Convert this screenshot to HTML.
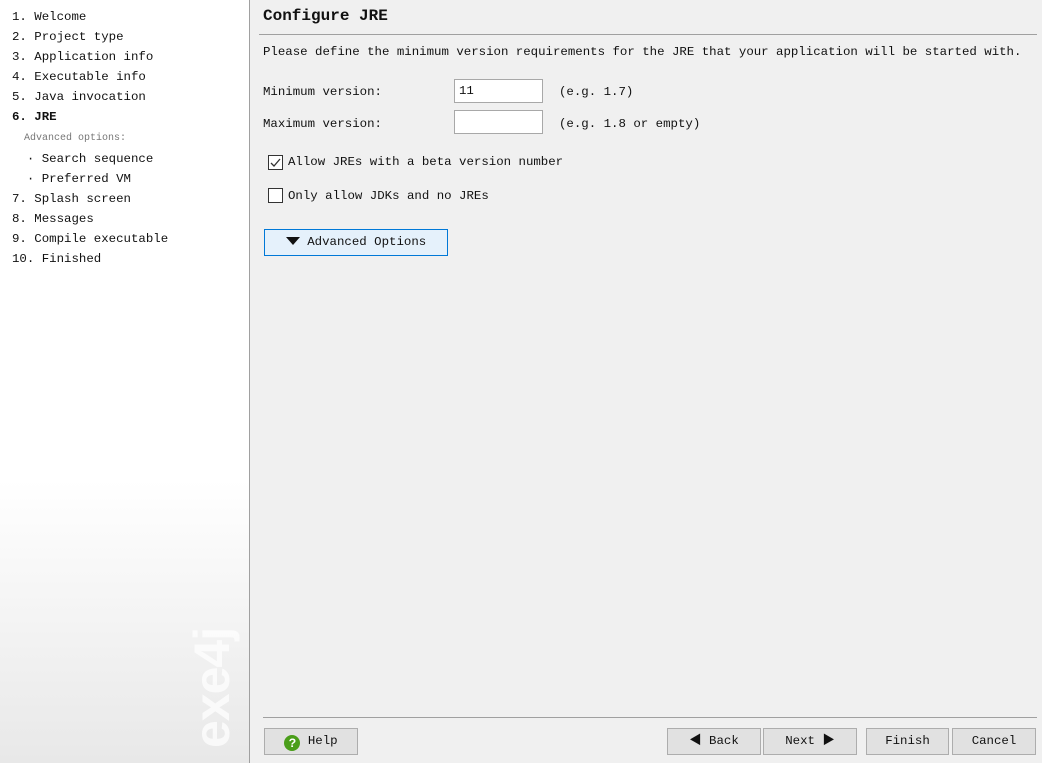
<!DOCTYPE html><html><head><style>
body{margin:0;width:1042px;height:763px;background:#f0f0f0;font-family:"Liberation Mono","Noto Serif CJK SC",monospace;font-size:12.4px;color:#111;position:relative;overflow:hidden}
.a{position:absolute;white-space:nowrap}
#side{position:absolute;left:0;top:0;width:249px;height:763px;background:linear-gradient(#fff 0,#fff 480px,#e8e8e8 763px);border-right:1px solid #a0a0a0}
.btn{position:absolute;height:27px;background:#e1e1e1;border:1px solid #adadad;box-sizing:border-box;text-align:center;line-height:25px;font-size:12.4px}
.inp{position:absolute;width:89px;height:24px;background:#fff;border:1px solid #a8a8a8;box-sizing:border-box;padding-left:4px;line-height:22px}
.cb{position:absolute;width:15px;height:15px;background:#fff;border:1px solid #333;box-sizing:border-box}
</style></head><body>
<div id="side">
<div class="a" style="left:12px;top:7px;line-height:20px">1. Welcome<br>2. Project type<br>3. Application info<br>4. Executable info<br>5. Java invocation<br><b>6. JRE</b><br><span style="font-size:10px;color:#777">&nbsp;&nbsp;Advanced options:</span><br>&nbsp;&nbsp;· Search sequence<br>&nbsp;&nbsp;· Preferred VM<br>7. Splash screen<br>8. Messages<br>9. Compile executable<br>10. Finished</div>
<div class="a" style="transform:rotate(-90deg);transform-origin:0 0;top:748px;left:186px;font-family:'Liberation Sans',sans-serif;font-weight:bold;font-size:50px;color:#fff;opacity:.75;line-height:52px;letter-spacing:-1px">exe4j</div>
</div>
<div class="a" style="left:263px;top:7px;font-size:16px;font-weight:bold">Configure JRE</div>
<div class="a" style="left:259px;top:34px;width:778px;height:1px;background:#a0a0a0"></div>
<div class="a" style="left:263px;top:45px">Please define the minimum version requirements for the JRE that your application will be started with.</div>
<div class="a" style="left:263px;top:85px">Minimum version:</div>
<div class="inp" style="left:454px;top:79px">11</div>
<div class="a" style="left:559px;top:85px">(e.g. 1.7)</div>
<div class="a" style="left:263px;top:117px">Maximum version:</div>
<div class="inp" style="left:454px;top:110px"></div>
<div class="a" style="left:559px;top:117px">(e.g. 1.8 or empty)</div>
<div class="cb" style="left:268px;top:155px"><svg width="13" height="13" style="position:absolute;left:0;top:0"><path d="M2 7l3 3 6-7" stroke="#333" stroke-width="1.3" fill="none"/></svg></div>
<div class="a" style="left:288px;top:155px">Allow JREs with a beta version number</div>
<div class="cb" style="left:268px;top:188px"></div>
<div class="a" style="left:288px;top:189px">Only allow JDKs and no JREs</div>
<div class="btn" style="left:264px;top:229px;width:184px;background:#e5f1fb;border-color:#0078d7"><svg width="14" height="8" style="vertical-align:0"><path d="M0 0h14L7 8z" fill="#111"/></svg> Advanced Options</div>
<div class="a" style="left:263px;top:717px;width:774px;height:1px;background:#a0a0a0"></div>
<div class="btn" style="left:264px;top:728px;width:94px"><span style="display:inline-block;width:16px;height:16px;border-radius:50%;background:#4a9e1a;color:#fff;font-weight:bold;line-height:16px;font-family:'Liberation Sans';vertical-align:-3px">?</span> Help</div>
<div class="btn" style="left:667px;top:728px;width:94px">&#9664; Back</div>
<div class="btn" style="left:763px;top:728px;width:94px">Next &#9654;</div>
<div class="btn" style="left:866px;top:728px;width:83px">Finish</div>
<div class="btn" style="left:952px;top:728px;width:84px">Cancel</div>
</body></html>
